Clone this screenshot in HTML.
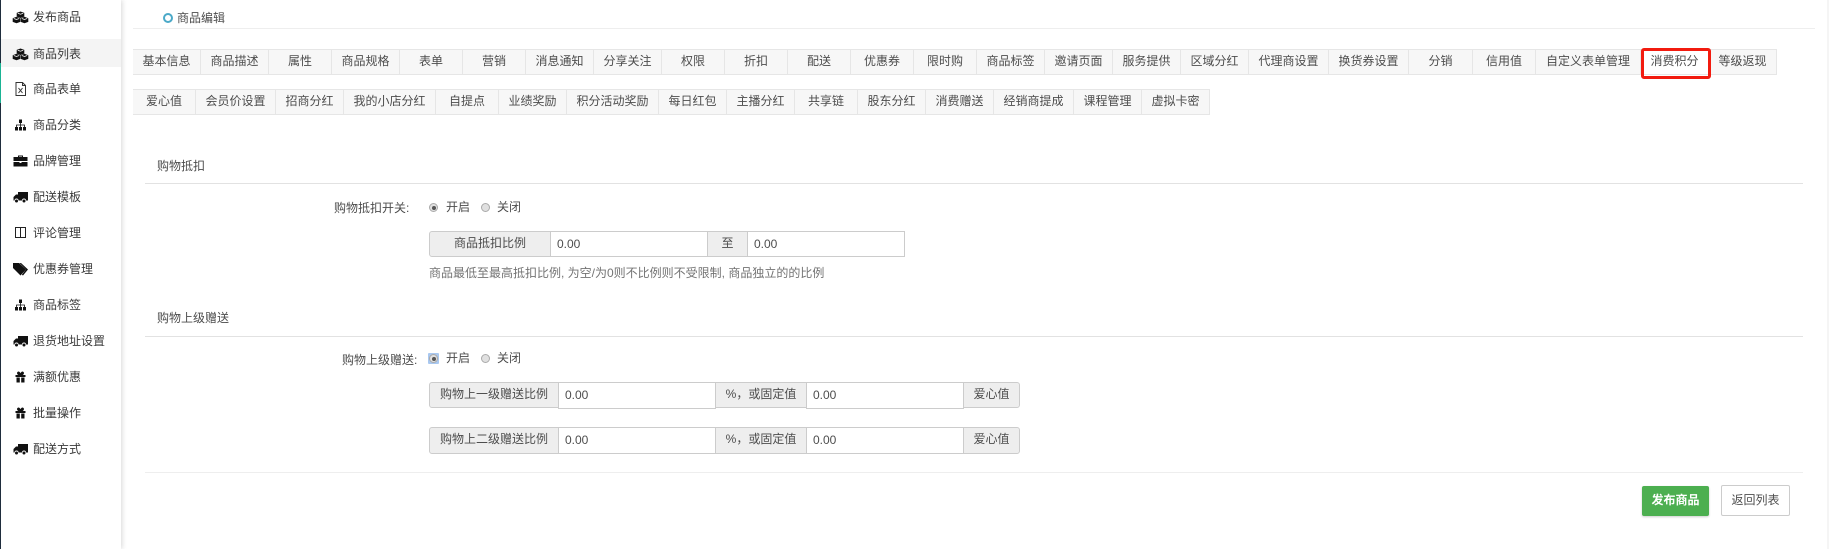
<!DOCTYPE html>
<html lang="zh-CN"><head><meta charset="utf-8"><title>商品编辑</title>
<style>
*{box-sizing:border-box}
html,body{margin:0;padding:0;width:1829px;height:549px;overflow:hidden;background:#fff}
body{position:relative;font:12px/16px "Liberation Sans","Noto Sans CJK SC",sans-serif;color:#4d4d4d}
.a{position:absolute;white-space:nowrap}
#side{position:absolute;left:0;top:0;width:121px;height:549px;background:#fff;box-shadow:1px 0 5px rgba(0,0,0,.16)}
#side .st{position:absolute;left:0;top:0;width:1px;height:549px;background:#1f2d3d}
#side .tl{position:absolute;left:0;top:63px;width:1px;height:40px;background:#1ab394}
#side .act{position:absolute;left:1px;top:39px;width:120px;height:28px;background:#f4f4f4}
#side .t{position:absolute;left:33px;color:#3a3a3a;line-height:16px;white-space:nowrap}
#side svg{position:absolute;left:12px;width:17px;height:14px}
.tabs{position:absolute;left:133px;display:flex;height:26px}
.tabs span{display:block;height:26px;line-height:23px;text-align:center;background:#f7f7f7;border:1px solid #e6e6e6;border-left:0;color:#4d4d4d;white-space:nowrap}
.tabs span.on{background:#fff}
.hr{position:absolute;height:1px;background:#e2e2e2}
.radio{position:absolute;width:9px;height:9px;border-radius:50%;background:#e0e0e0;border:1px solid #aaa}
.radio.c::after{content:"";position:absolute;left:1.5px;top:1.5px;width:4px;height:4px;border-radius:50%;background:#555}
.b{position:absolute;background:#eee;border:1px solid #ccc;color:#4d4d4d;text-align:center;line-height:23px;white-space:nowrap}
.i{position:absolute;background:#fff;border:1px solid #ccc;color:#4d4d4d;padding-left:6px;line-height:24px}
</style></head><body>

<div id="side"><div class="st"></div><div class="tl"></div><div class="act"></div>
<svg style="top:10px" viewBox="0 0 17 14"><g fill="#111"><path d="M8.500 1.500l3.800 1.400v3.700l-3.800 1.400-3.800-1.400V2.900z"/><path d="M4.500 6.800l3.800 1.400v3.700l-3.800 1.400-3.800-1.400V8.200z"/><path d="M12.500 6.800l3.800 1.400v3.700l-3.800 1.400-3.800-1.400V8.200z"/></g><path d="M5.800 3.200l2.700 1 2.700-1M1.800 8.500l2.700 1 2.700-1M9.800 8.500l2.700 1 2.700-1" stroke="#fff" stroke-width=".8" fill="none"/></svg>
<div class="t" style="top:9px">发布商品</div>
<svg style="top:47px" viewBox="0 0 17 14"><g fill="#111"><path d="M8.500 1.500l3.800 1.400v3.700l-3.800 1.400-3.800-1.400V2.900z"/><path d="M4.500 6.800l3.800 1.400v3.700l-3.800 1.400-3.800-1.400V8.200z"/><path d="M12.500 6.800l3.800 1.400v3.700l-3.800 1.400-3.800-1.400V8.200z"/></g><path d="M5.800 3.200l2.700 1 2.700-1M1.800 8.500l2.700 1 2.700-1M9.800 8.500l2.700 1 2.700-1" stroke="#fff" stroke-width=".8" fill="none"/></svg>
<div class="t" style="top:46px">商品列表</div>
<svg style="top:82px" viewBox="0 0 17 14"><path d="M4 .5h6.500l3 3v10H4zM10.500 .5v3h3" fill="none" stroke="#333"/><path d="M6.500 6l4 5M10.500 6l-4 5" stroke="#333" fill="none"/></svg>
<div class="t" style="top:81px">商品表单</div>
<svg style="top:118px" viewBox="0 0 17 14"><path d="M7 1.500h3V5H7zM3 9h3v3.500H3zM7 9h3v3.500H7zM11 9h3v3.500h-3z" fill="#111"/><path d="M8.500 5v4M4.500 9V7h8v2" stroke="#111" stroke-width=".8" fill="none"/></svg>
<div class="t" style="top:117px">商品分类</div>
<svg style="top:154px" viewBox="0 0 17 14"><path d="M6 3V1.500h5V3h4.500v4h-14V3zM7 3h3V2.500H7zM1.500 8h6v1h2V8h6v4.500h-14z" fill="#111"/></svg>
<div class="t" style="top:153px">品牌管理</div>
<svg style="top:190px" viewBox="0 0 17 14"><path d="M6 2h10v8.500h-2a2 2 0 0 0-4 0H6.500a2 2 0 0 0-4 0H1.500V7L4 4.500h2z" fill="#111"/><circle cx="4.500" cy="11" r="1.500" fill="#111"/><circle cx="12" cy="11" r="1.500" fill="#111"/></svg>
<div class="t" style="top:189px">配送模板</div>
<svg style="top:226px" viewBox="0 0 17 14"><path d="M3.500 1.500h10v10h-10zM8.500 1.500v10" fill="none" stroke="#222"/></svg>
<div class="t" style="top:225px">评论管理</div>
<svg style="top:262px" viewBox="0 0 17 14"><path d="M1 1h6l7 6.500-5.500 6L1 6z" fill="#111"/><path d="M9 1l7 6.500-5 6-1.200-.8 4.200-5.200L7.500 1z" fill="#111"/></svg>
<div class="t" style="top:261px">优惠券管理</div>
<svg style="top:298px" viewBox="0 0 17 14"><path d="M7 1.500h3V5H7zM3 9h3v3.500H3zM7 9h3v3.500H7zM11 9h3v3.500h-3z" fill="#111"/><path d="M8.500 5v4M4.500 9V7h8v2" stroke="#111" stroke-width=".8" fill="none"/></svg>
<div class="t" style="top:297px">商品标签</div>
<svg style="top:334px" viewBox="0 0 17 14"><path d="M6 2h10v8.500h-2a2 2 0 0 0-4 0H6.500a2 2 0 0 0-4 0H1.500V7L4 4.500h2z" fill="#111"/><circle cx="4.500" cy="11" r="1.500" fill="#111"/><circle cx="12" cy="11" r="1.500" fill="#111"/></svg>
<div class="t" style="top:333px">退货地址设置</div>
<svg style="top:370px" viewBox="0 0 17 14"><path d="M5.500 2c1-1 2.300-.3 3 1.200.7-1.500 2-2.200 3-1.200s.3 2.400-.8 3h2.800v2H3.500V5h2.800C5.200 4.400 4.500 3 5.500 2zM4.500 7.500h3.300V12.500H4.500zM9.200 7.500h3.300V12.500H9.200z" fill="#111"/></svg>
<div class="t" style="top:369px">满额优惠</div>
<svg style="top:406px" viewBox="0 0 17 14"><path d="M5.500 2c1-1 2.300-.3 3 1.200.7-1.500 2-2.200 3-1.200s.3 2.400-.8 3h2.800v2H3.500V5h2.800C5.200 4.400 4.500 3 5.500 2zM4.500 7.500h3.300V12.500H4.500zM9.200 7.500h3.300V12.500H9.200z" fill="#111"/></svg>
<div class="t" style="top:405px">批量操作</div>
<svg style="top:442px" viewBox="0 0 17 14"><path d="M6 2h10v8.500h-2a2 2 0 0 0-4 0H6.500a2 2 0 0 0-4 0H1.500V7L4 4.500h2z" fill="#111"/><circle cx="4.500" cy="11" r="1.500" fill="#111"/><circle cx="12" cy="11" r="1.500" fill="#111"/></svg>
<div class="t" style="top:441px">配送方式</div>
</div>

<div class="a" style="left:163px;top:13px;width:10px;height:10px;border:2px solid #4ba9c8;border-radius:50%"></div>
<div class="a" style="left:177px;top:10px">商品编辑</div>
<div class="hr" style="left:133px;top:28px;width:1682px;background:#eee"></div>

<div class="tabs" style="top:49px"><span style="width:68px">基本信息</span><span style="width:68px">商品描述</span><span style="width:63px">属性</span><span style="width:68px">商品规格</span><span style="width:63px">表单</span><span style="width:63px">营销</span><span style="width:68px">消息通知</span><span style="width:68px">分享关注</span><span style="width:63px">权限</span><span style="width:63px">折扣</span><span style="width:63px">配送</span><span style="width:63px">优惠券</span><span style="width:63px">限时购</span><span style="width:68px">商品标签</span><span style="width:68px">邀请页面</span><span style="width:68px">服务提供</span><span style="width:68px">区域分红</span><span style="width:80px">代理商设置</span><span style="width:80px">换货券设置</span><span style="width:64px">分销</span><span style="width:63px">信用值</span><span style="width:105px">自定义表单管理</span><span class="on" style="width:68px">消费积分</span><span style="width:68px">等级返现</span></div>

<div class="tabs" style="top:89px"><span style="width:63px">爱心值</span><span style="width:80px">会员价设置</span><span style="width:68px">招商分红</span><span style="width:92px">我的小店分红</span><span style="width:63px">自提点</span><span style="width:68px">业绩奖励</span><span style="width:92px">积分活动奖励</span><span style="width:68px">每日红包</span><span style="width:68px">主播分红</span><span style="width:63px">共享链</span><span style="width:68px">股东分红</span><span style="width:68px">消费赠送</span><span style="width:80px">经销商提成</span><span style="width:68px">课程管理</span><span style="width:68px">虚拟卡密</span></div>

<div class="a" style="left:1641px;top:48px;width:70px;height:31px;border:3px solid #f21b0f;border-radius:3px"></div>

<div class="a" style="left:157px;top:158px">购物抵扣</div>
<div class="hr" style="left:145px;top:183px;width:1658px"></div>
<div class="a" style="left:334px;top:200px">购物抵扣开关:</div>
<span class="radio c" style="left:429px;top:203px"></span><div class="a" style="left:446px;top:199px">开启</div>
<span class="radio" style="left:481px;top:203px"></span><div class="a" style="left:497px;top:199px">关闭</div>
<div class="b" style="left:429px;top:231px;width:122px;height:26px;border-radius:3px 0 0 3px">商品抵扣比例</div>
<div class="i" style="left:550px;top:231px;width:158px;height:26px">0.00</div>
<div class="b" style="left:707px;top:231px;width:41px;height:26px">至</div>
<div class="i" style="left:747px;top:231px;width:158px;height:26px">0.00</div>
<div class="a" style="left:429px;top:265px;color:#737373">商品最低至最高抵扣比例, 为空/为0则不比例则不受限制, 商品独立的的比例</div>

<div class="a" style="left:157px;top:310px">购物上级赠送</div>
<div class="hr" style="left:145px;top:336px;width:1658px"></div>
<div class="a" style="left:342px;top:352px">购物上级赠送:</div>
<span class="a" style="left:428px;top:353px;width:11px;height:11px;background:#a9c8f0;border-radius:1px"></span>
<span class="radio c" style="left:429px;top:354px"></span><div class="a" style="left:446px;top:350px">开启</div>
<span class="radio" style="left:481px;top:354px"></span><div class="a" style="left:497px;top:350px">关闭</div>

<div class="b" style="left:429px;top:382px;width:130px;height:26px;border-radius:3px 0 0 3px">购物上一级赠送比例</div>
<div class="i" style="left:558px;top:382px;width:158px;height:27px">0.00</div>
<div class="b" style="left:715px;top:382px;width:92px;height:26px">%，或固定值</div>
<div class="i" style="left:806px;top:382px;width:158px;height:27px">0.00</div>
<div class="b" style="left:963px;top:382px;width:57px;height:26px;border-radius:0 3px 3px 0">爱心值</div>

<div class="b" style="left:429px;top:427px;width:130px;height:27px;border-radius:3px 0 0 3px">购物上二级赠送比例</div>
<div class="i" style="left:558px;top:427px;width:158px;height:27px">0.00</div>
<div class="b" style="left:715px;top:427px;width:92px;height:27px">%，或固定值</div>
<div class="i" style="left:806px;top:427px;width:158px;height:27px">0.00</div>
<div class="b" style="left:963px;top:427px;width:57px;height:27px;border-radius:0 3px 3px 0">爱心值</div>

<div class="hr" style="left:145px;top:472px;width:1658px;background:#eee"></div>
<div class="a" style="left:1642px;top:486px;width:67px;height:30px;background:#4caf50;border-radius:2px;box-shadow:0 1px 2px rgba(0,0,0,.2);color:#fff;font-weight:bold;text-align:center;line-height:29px">发布商品</div>
<div class="a" style="left:1721px;top:485px;width:69px;height:31px;background:#fff;border:1px solid #ccc;border-radius:2px;color:#4d4d4d;text-align:center;line-height:29px">返回列表</div>
<div class="a" style="left:1827px;top:0;width:2px;height:549px;background:#f5f5f5"></div>
</body></html>
